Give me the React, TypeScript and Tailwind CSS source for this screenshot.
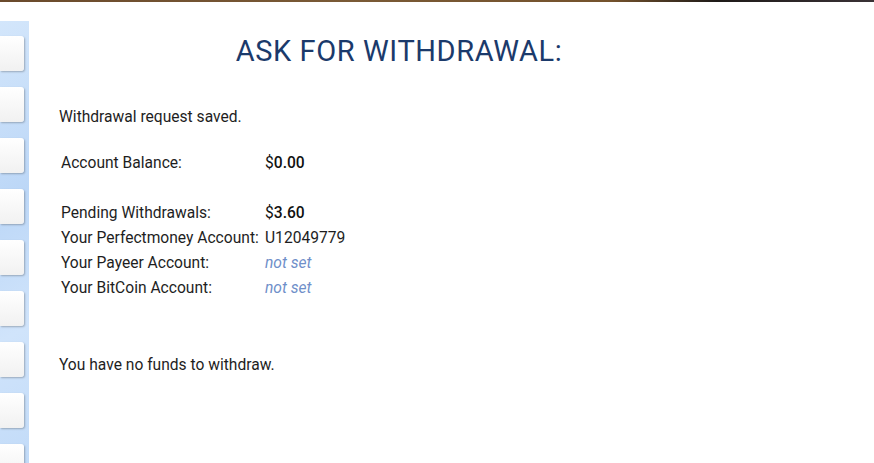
const rows = [
    { label: 'Pending Withdrawals:', value: '3.60', kind: 'money' },
    { label: 'Your Perfectmoney Account:', value: 'U12049779', kind: 'plain' },
    { label: 'Your Payeer Account:', value: 'not set', kind: 'unset' },
    { label: 'Your BitCoin Account:', value: 'not set', kind: 'unset' },
]

function Sidebar() {
    return (
        <div className="w-[29px] shrink-0 mt-[19px] bg-[#c5ddf9] bg-[linear-gradient(150deg,#d3e6fb_0%,#bcd7f7_40%,#d0e4fb_70%,#c2dbf8_100%)] pt-[15px] flex flex-col gap-[16px] overflow-hidden">
            {Array.from({ length: 9 }).map((_, i) => (
                <div
                    key={i}
                    className="w-[24px] h-[35px] shrink-0 rounded-r-[3px] bg-[linear-gradient(180deg,#ffffff_0%,#f1f1f1_100%)] shadow-[1px_1px_2px_rgba(0,0,0,0.25)]"
                />
            ))}
        </div>
    )
}

function Value({ kind, value }: { kind: string; value: string }) {
    if (kind === 'money') {
        return (
            <span className="text-[#111]">
                $<span className="font-medium">{value}</span>
            </span>
        )
    }
    if (kind === 'unset') {
        return <span className="italic text-[#6f8fc9]">{value}</span>
    }
    return <span>{value}</span>
}

export default function App() {
    return (
        <div className="w-[874px] h-[463px] bg-white overflow-hidden font-['Roboto',sans-serif] text-[#1e1e1e]">
            <div className="h-[2px] bg-[linear-gradient(90deg,#6a4a2c_0%,#7a5a36_40%,#74522c_70%,#1e1a18_82%,#3a3236_100%)]" />
            <div className="flex h-[461px]">
                <Sidebar />
                <div className="w-[740px]">
                    <h1 className="text-center text-[29px] font-normal leading-none tracking-[0.6px] text-[#1b3a6b] pt-[35px]">
                        ASK FOR WITHDRAWAL:
                    </h1>
                    <div className="pl-[30px] text-[15.6px] leading-[25px]">
                        <p className="mt-[39px]">Withdrawal request saved.</p>
                        <div className="mt-[21px] pl-[2px] grid grid-cols-[204px_auto]">
                            <div>Account Balance:</div>
                            <div><Value kind="money" value="0.00" /></div>
                            <div className="h-[25px] col-span-2" />
                            {rows.map((r) => (
                                <div key={r.label} className="contents">
                                    <div>{r.label}</div>
                                    <div><Value kind={r.kind} value={r.value} /></div>
                                </div>
                            ))}
                        </div>
                        <p className="mt-[52px]">You have no funds to withdraw.</p>
                    </div>
                </div>
            </div>
        </div>
    )
}
